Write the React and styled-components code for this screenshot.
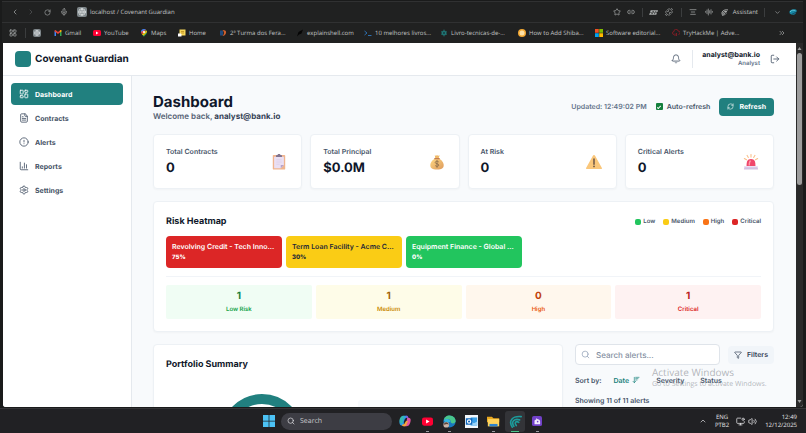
import React from "react";
import styled, { createGlobalStyle } from "styled-components";
import {
  LayoutDashboard,
  FileText,
  CircleAlert,
  BarChart3,
  Settings,
  Bell,
  LogOut,
  RefreshCw,
  Search,
  Filter,
  ArrowDownWideNarrow,
  ChevronLeft,
  ChevronRight,
  ChevronDown,
  ChevronUp,
  ChevronsRight,
  RotateCw,
  Mic,
  Globe,
  Star,
  Link2,
  Puzzle,
  AlignCenter,
  AudioLines,
  LayoutGrid,
  MonitorDot,
  Volume2,
} from "lucide-react";

const ui = '"Inter", "Liberation Sans", sans-serif';
const chrome = '"Open Sans", "Noto Sans", sans-serif';
const teal = "#21807f";

const GlobalStyle = createGlobalStyle`
  *, *::before, *::after { box-sizing: border-box; }
  body { margin: 0; background: #1c1d1f; overflow: hidden; text-rendering: geometricPrecision; }
  button, input { font: inherit; color: inherit; text-rendering: inherit; }
  button { border: 0; padding: 0; background: none; }
  h1, h2, p, dl, dd, dt { margin: 0; }
  a { color: inherit; text-decoration: none; }
  svg { display: block; flex: none; }
`;

const Desktop = styled.div`
  height: 100vh;
  display: flex;
  flex-direction: column;
  background: #202021;
  font-family: ${chrome};
`;

const Browser = styled.div`
  flex: 1;
  min-height: 0;
  display: flex;
  flex-direction: column;
  padding: 1px 3px 1px 2px;
  background: #1a1b1b;
`;

const Bar = styled.div`
  flex: none;
  display: flex;
  align-items: center;
  height: 21px;
  background: #202121;
  border-top: 1px solid #303132;
  color: #c2c4c4;
  font-size: 6px;
  white-space: nowrap;
`;

const IconButton = styled.button`
  display: flex;
  flex: none;
  align-items: center;
  justify-content: center;
  width: ${(p) => p.$w || 16}px;
  color: ${(p) => p.$color || "#b0b3b3"};
`;

const Divider = styled.span`
  flex: none;
  width: 1px;
  height: ${(p) => p.$h || 9}px;
  margin: 0 ${(p) => p.$gap || 5}px;
  background: ${(p) => p.$color || "#3b3d3e"};
`;

const GlobeBadge = styled.span`
  display: grid;
  place-items: center;
  width: ${(p) => p.$size}px;
  height: ${(p) => p.$size}px;
  border-radius: 2px;
  background: #7e868a;
  color: #eef1f2;
`;

const Address = styled.div`
  display: flex;
  align-items: center;
  gap: 3px;
  flex: 1;
  margin-left: 9px;
`;

const Bookmark = styled.a`
  display: flex;
  align-items: center;
  gap: 3px;
  flex: none;
  width: ${(p) => p.$w}px;
`;

const Overflow = styled.div`
  flex: 1;
  display: flex;
  justify-content: flex-end;
  padding-right: 13px;
`;

const Viewport = styled.div`
  flex: 1;
  min-height: 0;
  display: flex;
  margin-left: 1px;
  background: #fff;
  border-radius: 0 0 3px 3px;
  overflow: hidden;
`;

const Page = styled.div`
  flex: 1;
  min-width: 0;
  display: flex;
  flex-direction: column;
  background: #fff;
  font-family: ${ui};
  color: #0f172a;
`;

const Scrollbar = styled.div`
  flex: none;
  width: 7px;
  display: flex;
  flex-direction: column;
  align-items: center;
  padding: 3px 0;
  gap: 2px;
  background: #2a2a2a;
`;

const Thumb = styled.div`
  width: 5px;
  height: 37%;
  margin-bottom: auto;
  border-radius: 3px;
  background: #9d9d9d;
`;

const Header = styled.header`
  flex: none;
  display: flex;
  align-items: center;
  height: 33px;
  padding: 0 16px 0 12px;
  border-bottom: 1px solid #e5e9ee;
`;

const Logo = styled.span`
  width: 16px;
  height: 16px;
  margin-right: 4px;
  border-radius: 4px;
  background: ${teal};
`;

const Brand = styled.span`
  flex: 1;
  font-size: 10px;
  font-weight: 700;
`;

const User = styled.div`
  display: flex;
  flex-direction: column;
  margin-right: 10px;
  text-align: right;
  font-size: 7px;
  line-height: 9px;
  font-weight: 700;
`;

const Role = styled.span`
  font-size: 6px;
  font-weight: 600;
  line-height: 9px;
  color: #64748b;
`;

const Body = styled.div`
  flex: 1;
  min-height: 0;
  display: flex;
`;

const Sidebar = styled.nav`
  flex: none;
  width: 129px;
  padding: 7px 8px;
  display: flex;
  flex-direction: column;
  gap: 2px;
  border-right: 1px solid #e5e9ee;
`;

const NavItem = styled.a`
  display: flex;
  align-items: center;
  gap: 6px;
  height: 22px;
  padding: 0 8px;
  border-radius: 4px;
  font-size: 7px;
  font-weight: 700;
  background: ${(p) => (p.$active ? teal : "transparent")};
  color: ${(p) => (p.$active ? "#fff" : "#465366")};
`;

const Main = styled.main`
  flex: 1;
  min-width: 0;
  overflow: hidden;
  display: flex;
  flex-direction: column;
  gap: 12px;
  padding: 16px 22px 0 21px;
  background: #f8fafc;
  > * { flex: none; }
`;

const TitleRow = styled.div`
  display: flex;
  align-items: center;
  justify-content: space-between;
  margin-bottom: 1px;
`;

const Title = styled.h1`
  font-size: 15px;
  line-height: 19px;
  font-weight: 700;
`;

const Welcome = styled.p`
  font-size: 8px;
  line-height: 10px;
  font-weight: 600;
  color: #566375;
  strong { font-weight: 700; color: #334155; }
`;

const Actions = styled.div`
  display: flex;
  align-items: center;
  gap: 9px;
  font-size: 7px;
  font-weight: 600;
  color: #64748b;
`;

const CheckLabel = styled.label`
  display: flex;
  align-items: center;
  gap: 4px;
  color: #475569;
  input {
    appearance: none;
    width: 7px;
    height: 7px;
    margin: 0;
    border-radius: 1px;
    background: #15803d;
    display: grid;
    place-items: center;
  }
  input:checked::before {
    content: "";
    width: 4px;
    height: 2px;
    border: solid #fff;
    border-width: 0 0 1px 1px;
    transform: rotate(-45deg);
  }
`;

const PrimaryButton = styled.button`
  display: flex;
  align-items: center;
  gap: 5px;
  height: 18px;
  padding: 0 8px;
  border-radius: 4px;
  background: ${teal};
  color: #fff;
  font-weight: 700;
`;

const Stats = styled.section`
  display: grid;
  grid-template-columns: repeat(4, 1fr);
  gap: 8px;
`;

const Card = styled.section`
  border: 1px solid #edf1f5;
  border-radius: 4px;
  background: #fff;
  padding: 12px;
  box-shadow: 0 1px 2px rgba(15, 23, 42, 0.03);
`;

const StatCard = styled(Card)`
  display: flex;
  align-items: center;
  justify-content: space-between;
  padding: 11px 14px 10px 12px;
`;

const StatLabel = styled.p`
  font-size: 7px;
  line-height: 12px;
  font-weight: 600;
  color: #475569;
`;

const StatValue = styled.p`
  font-size: 13px;
  line-height: 20px;
  font-weight: 700;
`;

const CardHead = styled.div`
  display: flex;
  align-items: center;
  justify-content: space-between;
`;

const CardTitle = styled.h2`
  font-size: 9px;
  line-height: 15px;
  font-weight: 700;
`;

const Legend = styled.div`
  display: flex;
  gap: 8px;
  font-size: 6px;
  font-weight: 600;
  color: #475569;
  span { display: flex; align-items: center; gap: 2px; }
`;

const Swatch = styled.i`
  width: 6px;
  height: 6px;
  border-radius: 2px;
  background: ${(p) => p.$color};
`;

const Tiles = styled.div`
  display: flex;
  gap: 4px;
  margin-top: 7px;
  padding-bottom: 8px;
  border-bottom: 1px solid #f1f4f8;
`;

const Tile = styled.button`
  width: 116px;
  height: 32px;
  padding: 0 6px;
  border-radius: 4px;
  text-align: left;
  font-size: 7px;
  line-height: 11px;
  font-weight: 600;
  background: ${(p) => p.$bg};
  color: ${(p) => p.$fg};
  white-space: nowrap;
  span { display: block; }
  strong { display: block; font-size: 6px; font-weight: 800; }
`;

const Counts = styled.dl`
  display: grid;
  grid-template-columns: repeat(4, 1fr);
  gap: 4px;
  margin-top: 8px;
`;

const Count = styled.div`
  display: flex;
  flex-direction: column-reverse;
  padding: 3px 0 4px;
  border-radius: 2px;
  text-align: center;
  background: ${(p) => p.$bg};
  dd { font-size: 10px; line-height: 16px; font-weight: 700; color: ${(p) => p.$num}; }
  dt { font-size: 6px; line-height: 11px; font-weight: 600; color: ${(p) => p.$fg}; }
`;

const Lower = styled.div`
  display: grid;
  grid-template-columns: 410fr 199fr;
  gap: 12px;
`;

const Portfolio = styled.div`
  display: grid;
  grid-template-columns: 1fr 1fr;
  margin-top: 22px;
  justify-items: center;
`;

const SummaryPanel = styled.div`
  width: 100%;
  height: 60px;
  margin-top: 6px;
  border-radius: 3px;
  background: #f8fafc;
`;

const AlertPane = styled.section`
  display: flex;
  flex-direction: column;
  font-size: 7px;
  font-weight: 600;
  color: #475569;
`;

const SearchRow = styled.div`
  display: flex;
  align-items: center;
  gap: 8px;
`;

const SearchBox = styled.label`
  flex: 1;
  min-width: 0;
  display: flex;
  align-items: center;
  gap: 6px;
  height: 21px;
  padding: 0 5px;
  border: 1px solid #dfe4ea;
  border-radius: 4px;
  background: #fff;
  color: #94a3b8;
  input {
    width: 100%;
    min-width: 0;
    padding: 0;
    border: 0;
    outline: 0;
    background: none;
    font-size: 8px;
    font-weight: 500;
  }
  input::placeholder { color: #8590a2; }
`;

const FilterButton = styled.button`
  display: flex;
  align-items: center;
  gap: 5px;
  height: 18px;
  padding: 0 6px;
  border-radius: 4px;
  background: #f1f5f9;
  color: #334155;
`;

const SortRow = styled.div`
  position: relative;
  display: flex;
  align-items: center;
  height: 14px;
  margin-top: ${(p) => p.$top}px;
  font-size: 7px;
`;

const SortButton = styled.button`
  display: flex;
  align-items: center;
  gap: 3px;
  margin-left: ${(p) => p.$gap}px;
  font-weight: 600;
  color: ${(p) => (p.$active ? "#15807a" : "#475569")};
`;

const Watermark = styled.div`
  position: absolute;
  left: 77px;
  top: -7px;
  font-family: ${chrome};
  font-weight: 400;
  font-size: 7px;
  line-height: 11px;
  color: rgba(130, 134, 140, 0.6);
  white-space: nowrap;
  pointer-events: none;
  strong { display: block; font-weight: 400; font-size: 10px; line-height: 13px; }
`;

const Taskbar = styled.footer`
  flex: none;
  display: flex;
  align-items: center;
  height: 25px;
  padding: 0 9px 0 263px;
  border-top: 1px solid #343436;
  background: #212124;
  color: #e6e6e8;
  font-size: 6px;
`;

const TaskSearch = styled.label`
  display: flex;
  align-items: center;
  gap: 5px;
  width: 111px;
  height: 17px;
  margin: 0 2px 0 6px;
  padding: 0 6px;
  border-radius: 9px;
  background: #3d3d44;
  input {
    width: 60px;
    padding: 0;
    border: 0;
    outline: 0;
    background: none;
    font-size: 7px;
  }
  input::placeholder { color: #c7c7cb; }
`;

const TaskButton = styled.button`
  position: relative;
  display: grid;
  place-items: center;
  width: 20px;
  height: 21px;
  margin: 0 1px;
  border-radius: 3px;
  background: ${(p) => (p.$active ? "#333438" : "transparent")};
  &::after {
    content: "";
    position: absolute;
    bottom: 0;
    width: ${(p) => (p.$active ? 8 : 3)}px;
    height: 1px;
    background: ${(p) => (p.$active ? "#4cc38a" : p.$open ? "#9a9aa0" : "transparent")};
  }
`;

const Tray = styled.div`
  display: flex;
  align-items: center;
  margin-left: auto;
`;

const TrayIcons = styled.div`
  display: flex;
  align-items: center;
  gap: 3px;
  margin-left: 7px;
`;

const TrayText = styled.div`
  line-height: 8px;
  text-align: ${(p) => p.$align};
  margin-left: ${(p) => p.$gap}px;
`;

const Svg = ({ s = 8, vb = 16, children }) => (
  <svg width={s} height={s} viewBox={`0 0 ${vb} ${vb}`} fill="none" aria-hidden="true">
    {children}
  </svg>
);

const GmailIcon = () => (
  <Svg>
    <path d="M1 14V4l3 2v8z" fill="#4285f4" />
    <path d="M12 14V6l3-2v10z" fill="#34a853" />
    <path d="M1 4.500 8 10l7-5.500V3l-2-1-5 4-5-4-2 1z" fill="#ea4335" />
    <path d="M12 7l3-2.500V3l-1.500-1L12 3z" fill="#fbbc04" />
  </Svg>
);
const YouTubeIcon = ({ s = 8 }) => (
  <Svg s={s}>
    <rect y="2" width="16" height="12" rx="3" fill="#ff0033" />
    <path d="M6 5v6l5-3z" fill="#fff" />
  </Svg>
);
const MapsIcon = () => (
  <Svg>
    <path d="M8 0a6 6 0 0 0-6 6l3 2 7-6.500A6 6 0 0 0 8 0z" fill="#4285f4" />
    <path d="M2 6c0 2 1 3.500 2 5l8-9a6 6 0 0 0-1-1z" fill="#ea4335" />
    <path d="M4 11c2 2 3 3 4 5 1-4 6-5 6-10a6 6 0 0 0-2-4z" fill="#34a853" />
    <path d="M4 11 13 3l1 3-7 7z" fill="#fbbc04" />
    <circle cx="8" cy="6" r="2.200" fill="#fff" />
  </Svg>
);
const HomeIcon = () => (
  <Svg>
    <path d="M3 1h12v12H3z" fill="#f4d65a" />
    <path d="M0 9h7v6H0z" fill="#fff" />
    <path d="M6 5h6M6 8h6" stroke="#b98a1a" strokeWidth="1.500" />
  </Svg>
);
const TurmaIcon = () => (
  <Svg>
    <path d="M2 3h6v10H2z" fill="#214a7a" />
    <path d="M7 2c6 0 8 2 7 6s-4 6-7 6c4-4 4-8 0-12z" fill="#d1602e" />
  </Svg>
);
const ShellIcon = () => (
  <Svg>
    <path d="M2 15 5 6l9-5-3 8-5 2z" fill="#050505" />
  </Svg>
);
const PromptIcon = () => (
  <Svg>
    <path d="m1 4 5 4-5 4M8 13h7" stroke="#2e6fae" strokeWidth="2" />
  </Svg>
);
const BookIcon = () => (
  <Svg>
    <circle cx="8" cy="8" r="5" fill="#176b6b" />
    <path d="M8 1v14M2 5l12 6M14 5 2 11" stroke="#2f8580" strokeWidth="1.200" />
    <circle cx="8" cy="8" r="2" fill="#15393e" />
  </Svg>
);
const ShibaIcon = () => (
  <Svg>
    <circle cx="8" cy="8" r="8" fill="#f3a832" />
    <circle cx="8" cy="8" r="5" fill="#fde2a8" />
  </Svg>
);
const MicrosoftIcon = () => (
  <Svg>
    <path d="M0 0h7.500v7.500H0z" fill="#f25022" />
    <path d="M8.500 0H16v7.500H8.500z" fill="#7fba00" />
    <path d="M0 8.500h7.500V16H0z" fill="#00a4ef" />
    <path d="M8.500 8.500H16V16H8.500z" fill="#ffb900" />
  </Svg>
);
const HackIcon = () => (
  <Svg>
    <path d="M4 11a3 3 0 0 1 0-6 4 4 0 0 1 8-1 3.500 3.500 0 0 1 1 7M6 9v5M9 8v6" stroke="#8c1c26" strokeWidth="1.700" />
  </Svg>
);
const FeatherIcon = ({ s = 8, color = "#c5c7c7" }) => (
  <Svg s={s}>
    <path
      d="M4 15C-1 7 4 1 15 2M6 14C2 8 7 4 13 6M9 13c-3-4 0-6 3-4"
      stroke={color}
      strokeWidth="2"
      strokeLinecap="round"
    />
  </Svg>
);
const ExtensionIcon = () => (
  <Svg s={9}>
    <path d="M3 4h13l-1 3H2zM2 8h12l-1 4H0z" fill="#aeb1b1" />
    <path d="M6 6h3M11 6h2M4 10h3M9 10h2" stroke="#303333" strokeWidth="1.500" />
  </Svg>
);
const SwirlIcon = () => (
  <Svg s={8}>
    <path d="M1 9C0 4 5 2 10 3c5-2 7 3 4 6-1 4-4 5-7 4-3 0-6-1-6-4z" fill="#1688a5" />
    <path d="M2 8c3-4 8-5 11-2" stroke="#63c8dc" strokeWidth="2" />
    <path d="M7 11c2 1 4-1 7-3" stroke="#174461" strokeWidth="2" />
  </Svg>
);

const ClipboardArt = () => (
  <Svg s={16} vb={36}>
    <rect x="4" y="2" width="28" height="33" rx="2" fill="#efb48e" />
    <path d="M7 6h22v19l-7 7H7z" fill="#eadff3" />
    <path d="M29 25h-7v7z" fill="#b8a3ca" />
    <path d="M12 2h3a3 3 0 0 1 6 0h3l1 5H11z" fill="#81748f" />
    <path d="M12 13h12M12 18h12M12 23h8" stroke="#d9cbe6" strokeWidth="1.500" />
  </Svg>
);
const MoneyArt = () => (
  <Svg s={16} vb={36}>
    <defs>
      <linearGradient id="bag" x1="0" y1="0" x2="1" y2="1">
        <stop stopColor="#ffd983" />
        <stop offset="1" stopColor="#dd9a5c" />
      </linearGradient>
    </defs>
    <path d="M13 10C6 15 2 21 3 27c1 5 4 8 15 8s14-3 15-8c1-6-3-12-10-17z" fill="url(#bag)" />
    <path d="M13 3c3 2 3 0 5 0s3 2 6 0l-2 6h-8z" fill="#efb968" />
    <path d="M12 9h12v3H12z" fill="#c47c50" />
    <path d="M22 18c-2-3-8-2-8 1 0 4 8 2 8 6 0 3-6 4-8 1M18 14v17" stroke="#8c6f4c" strokeWidth="2" />
  </Svg>
);
const WarningArt = () => (
  <Svg s={16} vb={36}>
    <path d="M15.500 4c1-2 4-2 5 0l15 27c1 2 0 3-2 3h-31c-2 0-3-1-2-3z" fill="#fac77b" />
    <path d="M18 11v12" stroke="#6b5548" strokeWidth="3.400" strokeLinecap="round" />
    <circle cx="18" cy="28" r="2" fill="#6b5548" />
  </Svg>
);
const SirenArt = () => (
  <Svg s={16} vb={36}>
    <path d="M8 27c0-9 1-16 10-16s10 7 10 16z" fill="#f0476c" />
    <path d="M14 26c0-6 0-9 3-11" stroke="#ff9aa9" strokeWidth="3" />
    <path d="M4 27h28l2 8H2z" fill="#d3c0e2" />
    <path d="M4 27h28l1 3H3z" fill="#ecdff4" />
    <path d="M18 1v6M9 3l3 5M27 3l-3 5M3 10l5 3M33 10l-5 3" stroke="#fac08a" strokeWidth="2.400" strokeLinecap="round" />
  </Svg>
);

const WindowsIcon = () => (
  <Svg s={12}>
    <path d="M0 0h7.500v7.500H0zM8.500 0H16v7.500H8.500zM0 8.500h7.500V16H0zM8.500 8.500H16V16H8.500z" fill="#4cc2f5" />
  </Svg>
);
const CopilotIcon = () => (
  <Svg s={12}>
    <path d="M5 1h5c1 0 2 1 2 2l-3 1-3 9c-1 2-4 1-5-1-1-3 1-9 4-11z" fill="#2f9de8" />
    <path d="M3 2 7 1 5 10c-1 2-3 2-4 0C0 7 1 4 3 2z" fill="#36b9b0" />
    <path d="M11 4h2c3 0 3 3 2 6-1 4-3 5-5 5H6l3-3z" fill="#e253a0" />
    <path d="M6 15c-2 0-2-1-2-2l3-1 2-4h3l-2 5c0 1-1 2-2 2z" fill="#f3a53b" />
    <path d="M9 1h2l2 3h-3z" fill="#8757e0" />
    <path d="m6 10 2-5h2l-2 5z" fill="#212124" />
  </Svg>
);
const EdgeIcon = () => (
  <Svg s={13}>
    <circle cx="8" cy="8" r="7.500" fill="#1978bd" />
    <path d="M1 7C1 3 4 .500 8 .500c5 0 8 4 7.500 7.500-1 3-5 3-6 1 1-3-5-6-8.500-2z" fill="#49c68c" />
    <path d="M1 7c3-4 9-1 8 2-2-1-3 0-3 2" fill="#35b4dd" />
    <circle cx="4" cy="12" r="3.500" fill="#cbb5a8" />
    <path d="M1 12c1-4 5-4 6 0l-2-1z" fill="#58453d" />
  </Svg>
);
const OutlookIcon = () => (
  <Svg s={13}>
    <path d="M0 0h16v16H0z" fill="#f4f8fc" />
    <path d="M7 3h8v10H7z" fill="#3aa0e8" />
    <path d="m7 8 4 2 4-2v5H7z" fill="#9bd3f7" />
    <path d="M1 4h8v8H1z" fill="#1168bd" />
    <circle cx="5" cy="8" r="2" stroke="#fff" strokeWidth="1.400" />
  </Svg>
);
const FolderIcon = () => (
  <Svg s={13}>
    <path d="M0 2h6l2 2h7v5H0z" fill="#e9a820" />
    <path d="M1 5h14v9H1z" fill="#ffd45c" />
    <path d="M3 11h10v3H3z" fill="#2d84cf" />
  </Svg>
);
const PurpleIcon = () => (
  <Svg s={10}>
    <rect width="16" height="16" rx="3" fill="#7141c8" />
    <path d="M4 13V7l3-2V3l2 2c3 0 4 2 4 4v4z" fill="#f3edff" />
    <circle cx="9" cy="9" r="1.300" fill="#7141c8" />
  </Svg>
);

const bookmarks = [
  ["Gmail", GmailIcon, 39],
  ["YouTube", YouTubeIcon, 47],
  ["Maps", MapsIcon, 38],
  ["Home", HomeIcon, 41],
  ["2ª Turma dos Fera...", TurmaIcon, 77],
  ["explainshell.com", ShellIcon, 68],
  ["10 melhores livros...", PromptIcon, 76],
  ["Livro-tecnicas-de-...", BookIcon, 78],
  ["How to Add Shiba...", ShibaIcon, 77],
  ["Software editorial...", MicrosoftIcon, 77],
  ["TryHackMe | Adve...", HackIcon, 77],
];

const nav = [
  ["Dashboard", LayoutDashboard],
  ["Contracts", FileText],
  ["Alerts", CircleAlert],
  ["Reports", BarChart3],
  ["Settings", Settings],
];

const stats = [
  ["Total Contracts", "0", ClipboardArt],
  ["Total Principal", "$0.0M", MoneyArt],
  ["At Risk", "0", WarningArt],
  ["Critical Alerts", "0", SirenArt],
];

const levels = [
  ["Low", "#22c55e"],
  ["Medium", "#facc15"],
  ["High", "#f97316"],
  ["Critical", "#dc2626"],
];

const tiles = [
  ["Revolving Credit - Tech Inno...", "75%", "#dc2626", "#fff"],
  ["Term Loan Facility - Acme C...", "30%", "#facc15", "#1f2937"],
  ["Equipment Finance - Global ...", "0%", "#22c55e", "#fff"],
];

const counts = [
  ["Low Risk", 1, "#f0fdf4", "#15803d", "#16a34a"],
  ["Medium", 1, "#fefce8", "#a16207", "#ca8a04"],
  ["High", 0, "#fff7ed", "#c2410c", "#ea580c"],
  ["Critical", 1, "#fef2f2", "#b91c1c", "#dc2626"],
];

const BrowserBars = () => (
  <>
    <Bar>
      <IconButton $w={26} aria-label="Back"><ChevronLeft size={8} /></IconButton>
      <IconButton $w={6} $color="#5a5c5d" aria-label="Forward"><ChevronRight size={8} /></IconButton>
      <IconButton $w={26} aria-label="Reload"><RotateCw size={7} /></IconButton>
      <IconButton $w={8} aria-label="Voice"><Mic size={8} /></IconButton>
      <Address>
        <GlobeBadge $size={10}><Globe size={8} /></GlobeBadge>
        localhost / Covenant Guardian
      </Address>
      <IconButton $w={14} aria-label="Favorite"><Star size={8} /></IconButton>
      <IconButton $w={14} aria-label="Copy link"><Link2 size={8} /></IconButton>
      <Divider $gap={4} />
      <IconButton $w={13} aria-label="Extension"><ExtensionIcon /></IconButton>
      <IconButton $w={18} aria-label="Extensions"><Puzzle size={8} /></IconButton>
      <Divider $gap={3} />
      <IconButton $w={16} aria-label="Reader"><AlignCenter size={8} /></IconButton>
      <IconButton $w={16} aria-label="Read aloud"><AudioLines size={8} /></IconButton>
      <IconButton $w={16} aria-label="Assistant"><FeatherIcon s={7} /></IconButton>
      <span>Assistant</span>
      <Divider $gap={6} />
      <IconButton $w={12} aria-label="More"><ChevronDown size={7} /></IconButton>
      <IconButton $w={20} aria-label="Profile"><SwirlIcon /></IconButton>
    </Bar>
    <Bar>
      <IconButton $w={22} aria-label="Workspaces"><LayoutGrid size={8} /></IconButton>
      <Divider $gap={1} $h={10} />
      <IconButton $w={20} aria-label="localhost">
        <GlobeBadge $size={8}><Globe size={6} /></GlobeBadge>
      </IconButton>
      <Divider $gap={3} $color="#202121" />
      {bookmarks.map(([name, Icon, w]) => (
        <Bookmark key={name} href="#" $w={w}><Icon />{name}</Bookmark>
      ))}
      <Overflow>
        <IconButton aria-label="More bookmarks"><ChevronsRight size={8} /></IconButton>
      </Overflow>
    </Bar>
  </>
);

const Heatmap = () => (
  <Card>
    <CardHead>
      <CardTitle>Risk Heatmap</CardTitle>
      <Legend>
        {levels.map(([name, color]) => (
          <span key={name}><Swatch $color={color} />{name}</span>
        ))}
      </Legend>
    </CardHead>
    <Tiles>
      {tiles.map(([name, pct, bg, fg]) => (
        <Tile key={name} $bg={bg} $fg={fg}><span>{name}</span><strong>{pct}</strong></Tile>
      ))}
    </Tiles>
    <Counts>
      {counts.map(([name, n, bg, num, fg]) => (
        <Count key={name} $bg={bg} $num={num} $fg={fg}><dt>{name}</dt><dd>{n}</dd></Count>
      ))}
    </Counts>
  </Card>
);

const Alerts = () => (
  <AlertPane>
    <SearchRow>
      <SearchBox>
        <Search size={9} />
        <input type="text" placeholder="Search alerts..." aria-label="Search alerts" />
      </SearchBox>
      <FilterButton><Filter size={8} />Filters</FilterButton>
    </SearchRow>
    <SortRow $top={8}>
      <span>Sort by:</span>
      <SortButton $gap={12} $active>Date<ArrowDownWideNarrow size={8} /></SortButton>
      <SortButton $gap={16}>Severity</SortButton>
      <SortButton $gap={16}>Status</SortButton>
      <Watermark><strong>Activate Windows</strong>Go to Settings to activate Windows.</Watermark>
    </SortRow>
    <SortRow as="p" $top={6}>Showing 11 of 11 alerts</SortRow>
  </AlertPane>
);

export default function App() {
  return (
    <Desktop>
      <GlobalStyle />
      <Browser>
        <BrowserBars />
        <Viewport>
          <Page>
            <Header>
              <Logo />
              <Brand>Covenant Guardian</Brand>
              <IconButton $w={14} $color="#475569" aria-label="Notifications"><Bell size={10} /></IconButton>
              <Divider $gap={9} $h={18} $color="#e5e9ee" />
              <User>analyst@bank.io<Role>Analyst</Role></User>
              <IconButton $w={10} $color="#475569" aria-label="Log out"><LogOut size={10} /></IconButton>
            </Header>
            <Body>
              <Sidebar>
                {nav.map(([name, Icon], i) => (
                  <NavItem key={name} href="#" $active={i === 0}><Icon size={10} />{name}</NavItem>
                ))}
              </Sidebar>
              <Main>
                <TitleRow>
                  <div>
                    <Title>Dashboard</Title>
                    <Welcome>Welcome back, <strong>analyst@bank.io</strong></Welcome>
                  </div>
                  <Actions>
                    <span>Updated: 12:49:02 PM</span>
                    <CheckLabel><input type="checkbox" defaultChecked />Auto-refresh</CheckLabel>
                    <PrimaryButton><RefreshCw size={7} />Refresh</PrimaryButton>
                  </Actions>
                </TitleRow>
                <Stats>
                  {stats.map(([name, value, Art]) => (
                    <StatCard key={name} as="div">
                      <div><StatLabel>{name}</StatLabel><StatValue>{value}</StatValue></div>
                      <Art />
                    </StatCard>
                  ))}
                </Stats>
                <Heatmap />
                <Lower>
                  <Card>
                    <CardTitle>Portfolio Summary</CardTitle>
                    <Portfolio>
                      <svg width="82" height="82" viewBox="0 0 82 82" fill="none" role="img" aria-label="Portfolio chart">
                        <circle cx="41" cy="41" r="36" stroke={teal} strokeWidth="10" />
                      </svg>
                      <SummaryPanel />
                    </Portfolio>
                  </Card>
                  <Alerts />
                </Lower>
              </Main>
            </Body>
          </Page>
          <Scrollbar>
            <Svg s={5} vb={10}><path d="M5 2 9 8H1z" fill="#9d9d9d" /></Svg>
            <Thumb />
            <Svg s={5} vb={10}><path d="M5 8 9 2H1z" fill="#9d9d9d" /></Svg>
          </Scrollbar>
        </Viewport>
      </Browser>
      <Taskbar>
        <WindowsIcon />
        <TaskSearch><Search size={8} /><input type="text" placeholder="Search" aria-label="Search" /></TaskSearch>
        <TaskButton aria-label="Copilot"><CopilotIcon /></TaskButton>
        <TaskButton $open aria-label="YouTube"><YouTubeIcon s={11} /></TaskButton>
        <TaskButton $open aria-label="Edge"><EdgeIcon /></TaskButton>
        <TaskButton aria-label="Outlook"><OutlookIcon /></TaskButton>
        <TaskButton $open aria-label="File Explorer"><FolderIcon /></TaskButton>
        <TaskButton $active aria-label="Browser"><FeatherIcon s={13} color="#1c9c9c" /></TaskButton>
        <TaskButton $open aria-label="Chat"><PurpleIcon /></TaskButton>
        <Tray>
          <ChevronUp size={8} />
          <TrayText $align="center" $gap={8}>ENG<br />PTB2</TrayText>
          <TrayIcons><MonitorDot size={9} /><Volume2 size={9} /></TrayIcons>
          <TrayText $align="right" $gap={8}>12:49<br />12/12/2025</TrayText>
        </Tray>
      </Taskbar>
    </Desktop>
  );
}
